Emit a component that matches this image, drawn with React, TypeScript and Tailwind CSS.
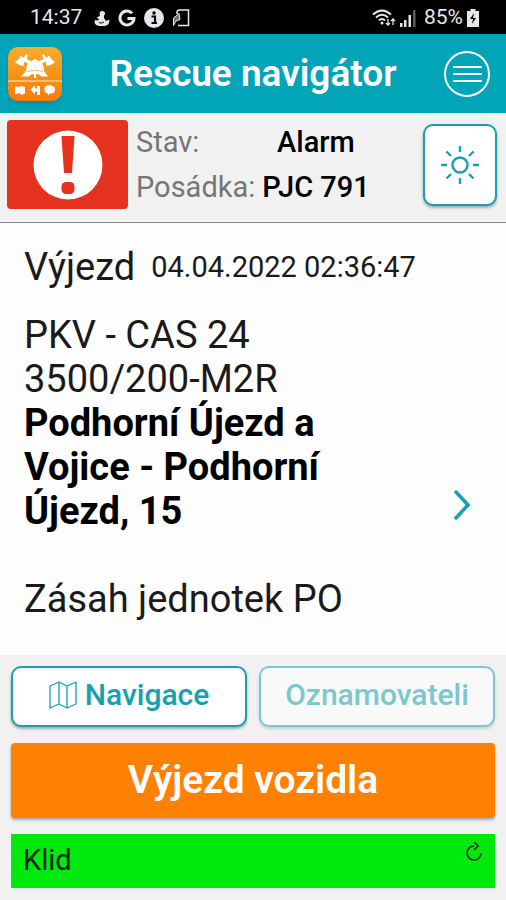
import { ReactNode } from 'react'

interface StatusRow {
  label: string
  value: string
}

const statusRows: StatusRow[] = [
  { label: 'Stav:', value: 'Alarm' },
  { label: 'Posádka:', value: 'PJC 791' },
]

function StatusBar() {
  return (
    <div className="flex h-[34px] items-center justify-between bg-black pt-px pr-[27px] pl-[30px] text-[21px] text-gray-200">
      <div className="flex items-center gap-2">
        <span className="mr-1">14:37</span>
        {/* anchor */}
        <svg className="h-4 w-4" viewBox="0 0 16 16" fill="currentColor">
          <path d="M5.500 3a3 3 0 0 1 5.500-.5q.5 1.500-1 3V8l2 3 3.500-1.500L15 13q-1.500 3-5 3H5q-3.500-.5-4.500-3L1 10l3 .5 1-1.500-2.500-1L6 5.500z" />
          <path d="M5 12.500q2.500 1.500 5-.5" stroke="#000" strokeWidth="1" fill="none" />
        </svg>
        <svg className="h-[18px] w-[18px]" viewBox="0 0 18 18" fill="none" stroke="currentColor" strokeWidth="3">
          <path d="M14.200 4.300A7 7 0 1 0 16 9.500H9.500" />
        </svg>
        <svg className="h-5 w-5" viewBox="0 0 20 20">
          <circle cx="10" cy="10" r="10" fill="currentColor" />
          <circle cx="10" cy="5" r="1.700" fill="#000" />
          <path d="M7.500 8.500h3.500V15M7.500 15h5.500" fill="none" stroke="#000" strokeWidth="2.200" />
        </svg>
        <svg className="h-[18px] w-[18px]" viewBox="0 0 18 18" fill="none" stroke="currentColor" strokeWidth="1.500">
          <path d="M5 5V3.500Q5 1 7.500 1h9v15.500H6" />
          <path d="M7 4.500L1.500 9v7.500L4 12l4-1.500z" fill="currentColor" fillOpacity="0.500" strokeWidth="1" />
        </svg>
      </div>
      <div className="flex items-center">
        <svg className="mr-1 h-[18px] w-6" viewBox="0 0 24 18" fill="none" stroke="currentColor" strokeWidth="2">
          <path d="M1 5.500q9-8 18 0M4 8.500q6-5.500 12 0M7 11.500q3-3 6 0" />
          <circle cx="10" cy="14" r="1.500" fill="currentColor" stroke="none" />
          <path d="M16 10v6m-2-2 2 2 2-2M21 16v-6m-2 2 2-2 2 2" strokeWidth="1.300" />
        </svg>
        <svg className="mr-2 h-[18px] w-4" viewBox="0 0 16 18" fill="currentColor">
          <path d="M0 14h2.500v4H0zM4 11h2.500v7H4zM8.500 6h2.500v12H8.500z" />
          <path d="M13 1h2.500v17H13z" opacity="0.400" />
        </svg>
        <span>85%</span>
        <svg className="ml-1 h-[18px] w-3" viewBox="0 0 12 18">
          <path d="M3.500 0h5v2H12v16H0V2h3.500z" fill="currentColor" />
          <path d="M7 4L3 10h3l-1 5 4-6H6z" fill="#000" />
        </svg>
      </div>
    </div>
  )
}

function AppLogo() {
  return (
    <svg className="h-[54px] w-[54px] rounded-[10px] shadow-md" viewBox="0 0 54 54" fill="#fff">
      <defs>
        <linearGradient id="logo-bg" x1="0" y1="0" x2="0" y2="1">
          <stop offset="0" stopColor="#f7ac2c" />
          <stop offset="1" stopColor="#f97a0b" />
        </linearGradient>
      </defs>
      <rect width="54" height="54" fill="url(#logo-bg)" />
      {/* crossed axes */}
      <path d="M7 15q4-2 6-6.500l3 2.500 1.500-3.500 2.500.5-1.500 4 4 2-2 3-4-2.500q-1 2-1 4.500-5-.5-8.500-4z" />
      <path d="M47 15q-4-2-6-6.500L38 11l-1.500-3.500-2.500.5 1.500 4-4 2 2 3 4-2.500q1 2 1 4.500 5-.5 8.500-4z" />
      {/* helmet */}
      <path d="M18 24q0-8.500 6-10.500l3-1.500 3 1.500q6 2 6 10.500l4 5.500h-6.500L30 27l-2 .5V31h-2v-3.500L24 27l-3.500 2.500H13z" />
      <path d="M19 24.500q8-3 16 0" fill="none" stroke="#f89a20" strokeWidth="0.700" />
      <path d="M0 34h54" stroke="#fff" strokeOpacity="0.800" />
      {/* map */}
      <path d="M7 39l3 1 3.500-1 3.500 1v6.500q-2 0-3 1.500l-3-2-4 1.500z" />
      {/* turn arrow */}
      <path d="M22.500 42.500l4.500-4v3h2V39h3v9h-3v-3.500h-2v3z" />
      {/* speech cloud */}
      <path d="M39 38.500q3-1.500 5 .5 3 .5 3 3.500 0 3-3 4h-2l-2 2v-2q-3 0-3.500-3-.5-4 2.500-5z" />
    </svg>
  )
}

function Header() {
  return (
    <header className="flex h-[79px] items-center justify-between bg-[#02a4b7] pr-4 pl-2 text-white">
      <AppLogo />
      <h1 className="text-[37px] font-semibold">Rescue navigátor</h1>
      <button type="button" aria-label="Menu">
        <svg className="h-[46px] w-[46px]" viewBox="0 0 46 46" fill="none" stroke="currentColor" strokeWidth="2">
          <circle cx="23" cy="23" r="22" />
          <path d="M10 16h27M10 23h27M10 30h27" strokeLinecap="round" />
        </svg>
      </button>
    </header>
  )
}

function CrewStatus() {
  return (
    <section className="flex h-[110px] items-start border-b border-[#888] bg-[#f1f1f1] pt-[7px] pr-[9px] pl-[7px]">
      <svg className="h-[89px] w-[121px] shrink-0 rounded" viewBox="0 0 121 89">
        <rect width="121" height="89" fill="#e5321e" />
        <circle cx="61" cy="45" r="34.500" fill="#fff" />
        <path d="M54.500 16h13l-2.500 37h-8z" fill="#e5321e" />
        <rect x="54.500" y="62" width="13" height="12" rx="4.500" fill="#e5321e" />
      </svg>
      <dl className="ml-2 flex flex-1 flex-col text-[29px] leading-[46px]">
        {statusRows.map((row) => (
          <div key={row.label} className="-mt-px flex">
            <dt className="w-[122px] whitespace-nowrap text-[#757575]">{row.label}</dt>
            <dd className="w-[116px] text-center font-medium whitespace-nowrap text-black">{row.value}</dd>
          </div>
        ))}
      </dl>
      <button
        type="button"
        aria-label="Světlý režim"
        className="mt-1 flex h-[82px] w-[74px] shrink-0 items-center justify-center rounded-[10px] border-2 border-[#16a0b0] bg-white text-[#16a0b0] shadow-[0_2px_3px_rgba(0,0,0,0.3)]"
      >
        <svg className="h-10 w-10" viewBox="0 0 40 40" fill="none" stroke="currentColor" strokeWidth="2.400">
          <circle cx="20" cy="20" r="7.500" />
          <path d="M20 1v6M20 33v6M1 20h6M33 20h6M6.500 6.500l4.500 4.500M29 29l4.500 4.500M6.500 33.500l4.500-4.500M29 11l4.500-4.500" />
        </svg>
      </button>
    </section>
  )
}

function EventDetail() {
  return (
    <main className="flex flex-col bg-[#fdfdfd] px-6 pt-[22px] pb-[34px] text-[38px] leading-[44px] text-[#1a1a1a]">
      <div className="mb-6 flex items-center gap-4">
        <h2>Výjezd</h2>
        <time className="text-[29px]">04.04.2022 02:36:47</time>
      </div>
      <div className="flex items-center justify-between">
        <div className="max-w-[320px]">
          <p>PKV - CAS 24</p>
          <p>3500/200-M2R</p>
          <p className="font-bold text-black">
            Podhorní Újezd a Vojice - Podhorní Újezd, 15
          </p>
          <p className="mt-11 whitespace-nowrap">Zásah jednotek PO</p>
        </div>
        <button type="button" aria-label="Detail" className="mt-[76px] mr-3 text-[#16a0b0]">
          <svg className="h-8 w-4" viewBox="0 0 16 32" fill="none" stroke="currentColor" strokeWidth="3.500" strokeLinecap="round">
            <path d="M2 3l12 13L2 29" />
          </svg>
        </button>
      </div>
    </main>
  )
}

interface OutlineButtonProps {
  children: ReactNode
  disabled?: boolean
}

function OutlineButton({ children, disabled }: OutlineButtonProps) {
  return (
    <button
      type="button"
      disabled={disabled}
      className="flex h-[61px] items-center justify-center gap-2 rounded-[10px] border-2 border-[#16a0b0] bg-white pb-1 text-[30px] font-medium text-[#16a0b0] shadow-[0_2px_3px_rgba(0,0,0,0.3)] disabled:border-[#7cc8d0] disabled:bg-[#f9f9f9] disabled:text-[#7cc8d0] disabled:shadow-[0_2px_3px_rgba(0,0,0,0.15)]"
    >
      {children}
    </button>
  )
}

function Actions() {
  return (
    <footer className="flex flex-col bg-[#f1f1f1] px-[11px] pt-[11px] pb-3">
      <div className="grid grid-cols-2 gap-3">
        <OutlineButton>
          <svg className="h-7 w-7" viewBox="0 0 28 28" fill="none" stroke="currentColor" strokeWidth="1.300" strokeLinejoin="round">
            <path d="M1 5l9-4 8 4 9-4v22l-9 4-8-4-9 4zM10 1v22M18 5v22" />
          </svg>
          Navigace
        </OutlineButton>
        <OutlineButton disabled>Oznamovateli</OutlineButton>
      </div>
      <button type="button" className="mt-4 h-[75px] rounded bg-[#ff8103] text-[39px] font-semibold text-white shadow-[0_2px_3px_rgba(0,0,0,0.3)]">
        Výjezd vozidla
      </button>
      <div className="mt-4 flex h-[54px] justify-between bg-[#00e90d] px-3 text-[29px] text-[#082808]">
        <span className="self-center">Klid</span>
        <button type="button" aria-label="Obnovit" className="mt-2 self-start">
          <svg className="h-5 w-[18px]" viewBox="0 0 18 20" fill="none" stroke="currentColor" strokeWidth="1.600">
            <path d="M9 4a7 7 0 1 0 7 7.500" />
            <path d="M9 0l4 4-4 4" />
          </svg>
        </button>
      </div>
    </footer>
  )
}

export default function App() {
  return (
    <div className="flex min-h-screen flex-col bg-[#f1f1f1] font-[Roboto,sans-serif]">
      <StatusBar />
      <Header />
      <CrewStatus />
      <EventDetail />
      <Actions />
    </div>
  )
}
